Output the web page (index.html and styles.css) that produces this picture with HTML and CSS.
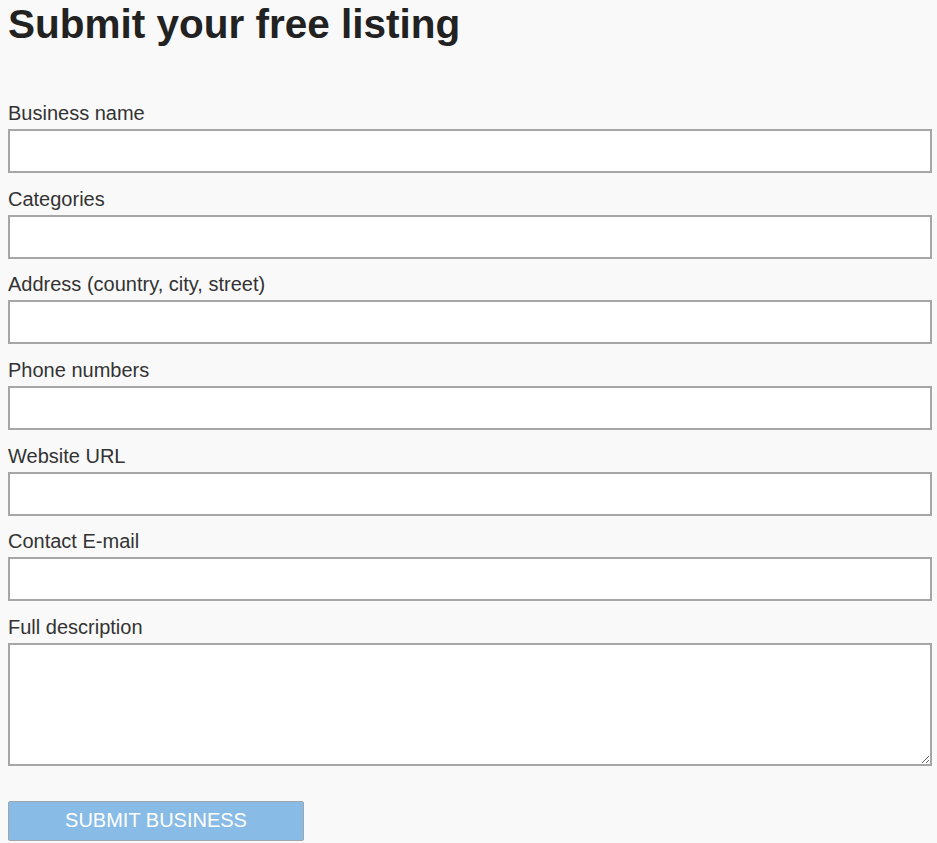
FILE: index.html
```html
<!DOCTYPE html>
<html lang="en">
<head>
    <meta charset="UTF-8">
    <meta name="viewport" content="width=device-width, initial-scale=1.0">
    <title>Submit your free listing</title>
    <link rel="stylesheet" href="styles.css">
</head>
<body>
    <h1>Submit your free listing</h1>

    <form class="listing-form">
        <div class="field">
            <label for="name">Business name</label>
            <input type="text" id="name">
        </div>
        <div class="field">
            <label for="categories">Categories</label>
            <input type="text" id="categories">
        </div>
        <div class="field">
            <label for="address">Address (country, city, street)</label>
            <input type="text" id="address">
        </div>
        <div class="field">
            <label for="phones">Phone numbers</label>
            <input type="text" id="phones">
        </div>
        <div class="field">
            <label for="website">Website URL</label>
            <input type="text" id="website">
        </div>
        <div class="field">
            <label for="email">Contact E-mail</label>
            <input type="text" id="email">
        </div>
        <div class="field">
            <label for="description">Full description</label>
            <textarea id="description"></textarea>
        </div>
        <button type="button" class="submit">SUBMIT BUSINESS</button>
    </form>
</body>
</html>
```

FILE: styles.css
```css
html {
    background: #f9f9f9;
}
body {
    font-family: "Liberation Sans", Arial, sans-serif;
    color: #333;
    margin: 0;
    padding: 0 5px 0 8px;
    background: #f9f9f9;
}
h1 {
    font-size: 40.5px;
    line-height: 46px;
    margin: 1px 0 55px;
    color: #222;
}
.listing-form {
    width: 924px;
}
.field {
    margin-bottom: 14.67px;
}
label {
    display: block;
    font-size: 20px;
    line-height: 23px;
    margin-bottom: 4px;
}
input,
textarea {
    display: block;
    box-sizing: border-box;
    width: 100%;
    height: 44px;
    margin: 0;
    border: 2px solid #a6a6a6;
    background: #fff;
    font-family: inherit;
    font-size: 18px;
}
textarea {
    height: 123px;
    resize: vertical;
}
.field:last-of-type {
    margin-bottom: 35px;
}
.submit {
    display: block;
    width: 296px;
    height: 40px;
    background: #88bbe5;
    color: #fff;
    border: 1px solid #a0a6ab;
    border-radius: 2px;
    font-family: inherit;
    font-size: 20px;
    padding: 0;
}
```
